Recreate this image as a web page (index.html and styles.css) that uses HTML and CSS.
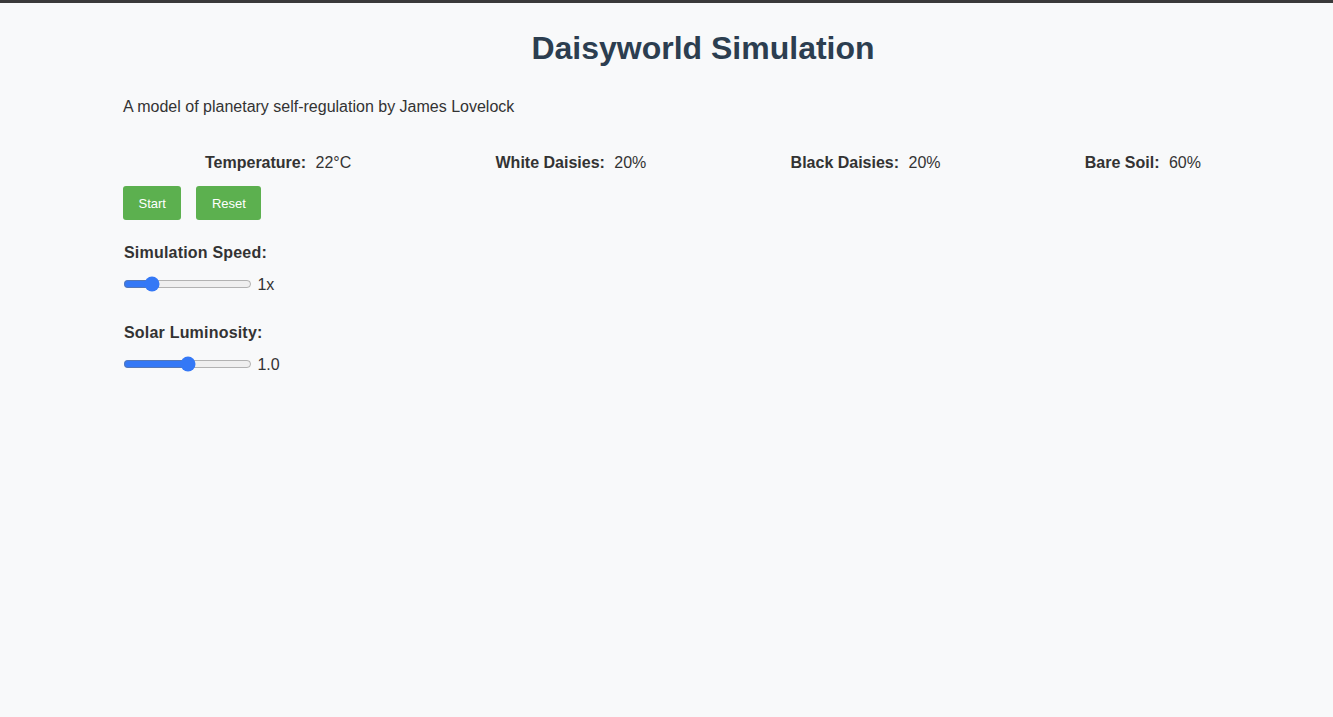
FILE: index.html
```html
<!DOCTYPE html>
<html lang="en">
<head>
<meta charset="utf-8">
<title>Daisyworld Simulation</title>
<link rel="stylesheet" href="styles.css">
</head>
<body>
<div class="topbar"></div>
<div class="container">
  <h1 class="title">Daisyworld Simulation</h1>
  <p class="subtitle">A model of planetary self-regulation by James Lovelock</p>
  <div class="stats">
    <div class="stat"><span class="stat-label">Temperature:</span> <span class="stat-value">22°C</span></div>
    <div class="stat"><span class="stat-label">White Daisies:</span> <span class="stat-value">20%</span></div>
    <div class="stat"><span class="stat-label">Black Daisies:</span> <span class="stat-value">20%</span></div>
    <div class="stat"><span class="stat-label">Bare Soil:</span> <span class="stat-value">60%</span></div>
  </div>
  <div class="buttons">
    <button class="btn">Start</button>
    <button class="btn">Reset</button>
  </div>
  <div class="control">
    <label class="control-label">Simulation Speed:</label>
    <div class="control-row"><input type="range" class="slider" min="0" max="1000" value="188"> <span class="value">1x</span></div>
  </div>
  <div class="control">
    <label class="control-label">Solar Luminosity:</label>
    <div class="control-row"><input type="range" class="slider" min="0" max="1000" value="500"> <span class="value">1.0</span></div>
  </div>
</div>
</body>
</html>
```

FILE: styles.css
```css
html, body {
  margin: 0;
  padding: 0;
  background: #f8f9fa;
  font-family: "Liberation Sans", Arial, sans-serif;
  color: #333333;
  font-size: 16px;
}
.topbar {
  height: 3px;
  background: #3a3a3a;
}
.container {
  width: 1160px;
  margin-left: 123px;
  padding-top: 27px;
}
.title {
  margin: 0;
  text-align: center;
  font-size: 32px;
  font-weight: bold;
  color: #2c3e50;
}
.subtitle {
  margin: 31px 0 0;
}
.stats {
  display: flex;
  justify-content: space-between;
  padding: 0 82px;
  margin-top: 38px;
}
.stat-label {
  font-weight: bold;
  margin-right: 5px;
}
.buttons {
  display: flex;
  gap: 15px;
  margin-top: 14px;
}
.btn {
  background: #5cb04f;
  color: #ffffff;
  border: none;
  border-radius: 3px;
  font-family: "Liberation Sans", Arial, sans-serif;
  font-size: 13px;
  padding: 0 15.5px;
  height: 34px;
}
.control {
  margin-top: 24px;
}
.control + .control {
  margin-top: 30px;
}
.control-label {
  display: block;
  font-weight: bold;
  margin-left: 1px;
  letter-spacing: 0.2px;
}
.control-row {
  margin-top: 12px;
}
.slider {
  width: 129px;
  margin: 0 1px 0 0;
  vertical-align: middle;
  accent-color: #3478f6;
}
.value {
  vertical-align: -2px;
}
```
